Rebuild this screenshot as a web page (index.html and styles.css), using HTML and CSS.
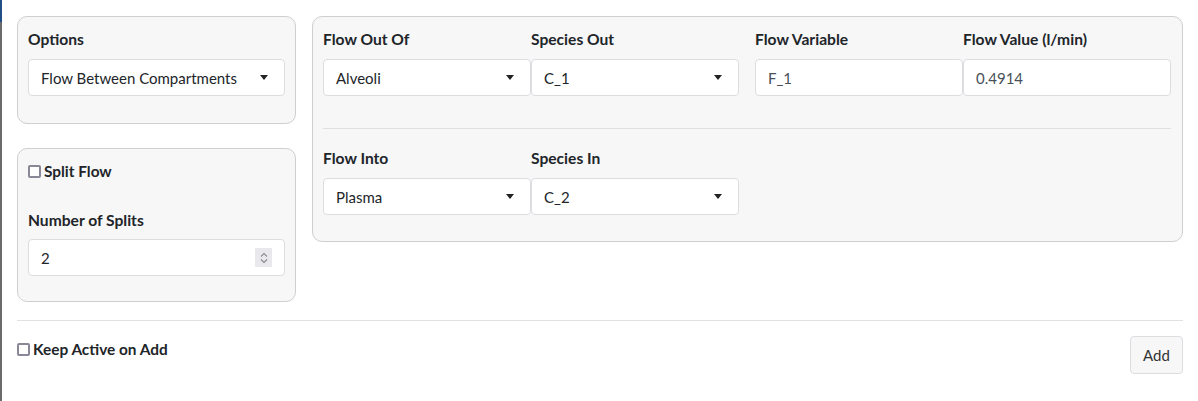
FILE: index.html
```html
<!DOCTYPE html>
<html>
<head>
<meta charset="utf-8">
<link rel="stylesheet" href="styles.css">
</head>
<body>
<div class="edge"></div>
<div class="modal">
  <div class="top">
    <div class="left-col">
      <div class="card card-options">
        <label class="lbl">Options</label>
        <div class="select wide"><span>Flow Between Compartments</span><i class="caret"></i></div>
      </div>
      <div class="card card-split">
        <label class="check"><input type="checkbox"><span>Split Flow</span></label>
        <label class="lbl lbl-splits">Number of Splits</label>
        <div class="input number"><span>2</span>
          <span class="spin"><svg width="12" height="16" viewBox="0 0 12 16"><path d="M3 6.5 L6 3.5 L9 6.5" fill="none" stroke="#8a8a8a" stroke-width="1.1"/><path d="M3 9.5 L6 12.5 L9 9.5" fill="none" stroke="#8a8a8a" stroke-width="1.1"/></svg></span>
        </div>
      </div>
    </div>
    <div class="card card-flow">
      <div class="row">
        <div class="pair">
          <div class="field"><label class="lbl">Flow Out Of</label><div class="select"><span>Alveoli</span><i class="caret"></i></div></div>
          <div class="field"><label class="lbl">Species Out</label><div class="select"><span>C_1</span><i class="caret"></i></div></div>
        </div>
        <div class="pair">
          <div class="field"><label class="lbl">Flow Variable</label><div class="input"><span class="val">F_1</span></div></div>
          <div class="field"><label class="lbl">Flow Value (l/min)</label><div class="input"><span class="val">0.4914</span></div></div>
        </div>
      </div>
      <hr class="sep">
      <div class="row">
        <div class="pair">
          <div class="field"><label class="lbl">Flow Into</label><div class="select"><span>Plasma</span><i class="caret"></i></div></div>
          <div class="field"><label class="lbl">Species In</label><div class="select"><span>C_2</span><i class="caret"></i></div></div>
        </div>
        <div class="pair"></div>
      </div>
    </div>
  </div>
  <hr class="foot-sep">
  <div class="footer">
    <label class="check"><input type="checkbox"><span>Keep Active on Add</span></label>
    <button class="btn">Add</button>
  </div>
</div>
</body>
</html>
```
FILE: styles.css
```css
* { box-sizing: border-box; }
html, body { margin: 0; padding: 0; background: #fff; }
body {
  font-family: "Lato", "Liberation Sans", sans-serif;
  font-size: 15px;
  color: #212529;
  width: 1198px;
  height: 401px;
  overflow: hidden;
  position: relative;
}
.edge {
  position: absolute;
  left: 0; top: 0;
  width: 2px; height: 401px;
  background: linear-gradient(#1f4f86 0, #1f4f86 22px, #6b6b6b 22px, #6b6b6b 100%);
}
.modal { padding: 16px 15px 0 17px; }
.top { display: flex; gap: 16px; align-items: flex-start; }
.left-col { width: 279px; display: flex; flex-direction: column; gap: 24px; }
.card {
  background: #f7f7f8;
  border: 1px solid #cfcfd2;
  border-radius: 10px;
}
.card-options { height: 108px; padding: 12px 10px 0 10px; }
.card-split { height: 154px; padding: 12px 10px 0 10px; }
.card-flow { flex: 1; height: 226px; padding: 12px 11px 0 10px; }
.lbl {
  display: block;
  font-weight: 700;
  font-size: 15.6px;
  line-height: 20px;
  height: 20px;
  margin-bottom: 10px;
  color: #212529;
}
.select, .input {
  height: 37px;
  background: #fff;
  border: 1px solid #dcdde1;
  border-radius: 4px;
  display: flex;
  align-items: center;
  padding: 0 12px;
  color: #212529;
  position: relative;
}
.input .val { color: #495057; }
.select span { flex: 1; }
.caret {
  width: 0; height: 0;
  border-left: 4px solid transparent;
  border-right: 4px solid transparent;
  border-top: 5px solid #222;
  margin-right: 4px;
}
.check {
  display: flex;
  align-items: center;
  font-weight: 700;
  font-size: 15.4px;
  line-height: 20px;
  color: #212529;
}
.check input {
  -webkit-appearance: none;
  appearance: none;
  margin: 0 3px 0 0;
  width: 13px; height: 13px;
  border: 2px solid #8b8797;
  border-radius: 2px;
  background: #fff;
}
.lbl-splits { margin-top: 29px; margin-bottom: 9px; }
.number { justify-content: space-between; }
.spin {
  width: 17px; height: 19px;
  background: #e9e9ed;
  display: flex; align-items: center; justify-content: center;
}
.row { display: flex; gap: 16px; }
.pair { flex: 1; display: flex; }
.field { flex: 1; }
.sep {
  border: 0;
  border-top: 1px solid #dedfe2;
  margin: 32px 0 19px 0;
}
.foot-sep {
  border: 0;
  border-top: 1px solid #e2e2e4;
  margin: 18px 0 0 0;
}
.footer {
  display: flex;
  justify-content: space-between;
  align-items: flex-start;
}
.footer .check { margin-top: 18px; }
.btn {
  margin-top: 15px;
  width: 53px;
  height: 38px;
  font-family: inherit;
  font-size: 15px;
  color: #333;
  background: #f7f7f8;
  border: 1px solid #dcdde1;
  border-radius: 4px;
  padding: 0;
}
```
